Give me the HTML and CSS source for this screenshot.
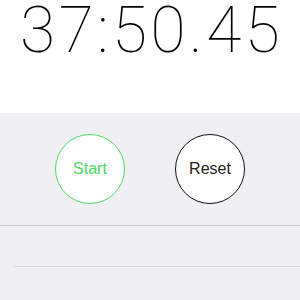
FILE: index.html
```html
<!DOCTYPE html>
<html lang="en">
<head>
    <meta charset="UTF-8" />
    <meta name="viewport" content="width=device-width, initial-scale=1.0"/>
    <title>Stopwatch</title>
    <link rel="stylesheet" href="styles.css">
</head>
<body>
<div class="display">
    <div class="time">37:50.45</div>
</div>
<div class="controls">
    <button class="circle start">Start</button>
    <button class="circle reset">Reset</button>
</div>
<ul class="laps">
    <li class="lap"></li>
    <li class="lap"></li>
</ul>
</body>
</html>
```

FILE: styles.css
```css
body {
    margin: 0;
    font-family: "Liberation Sans", Arial, sans-serif;
    background: #efeff4;
}
.display {
    background: #fff;
    height: 113px;
    display: flex;
    justify-content: center;
}
.time {
    font-family: Roboto, "Liberation Sans", sans-serif;
    font-weight: 100;
    font-size: 64px;
    line-height: 62px;
    letter-spacing: 3.5px;
    padding-left: 3.5px;
    color: #000;
}
.controls {
    height: 112px;
    display: flex;
    align-items: center;
    justify-content: center;
    gap: 50px;
}
.circle {
    width: 70px;
    height: 70px;
    border-radius: 50%;
    background: #fff;
    font-family: "Liberation Sans", Arial, sans-serif;
    font-size: 16px;
    padding: 0;
    cursor: pointer;
}
.start {
    border: 1.5px solid #4cd964;
    color: #4cd964;
}
.reset {
    border: 1.5px solid #111;
    color: #222;
}
.laps {
    list-style: none;
    margin: 0;
    padding: 0;
    border-top: 1px solid #c8c7cc;
}
.lap {
    height: 40px;
    margin-left: 14px;
    border-bottom: 1px solid #d9d9de;
}
```
